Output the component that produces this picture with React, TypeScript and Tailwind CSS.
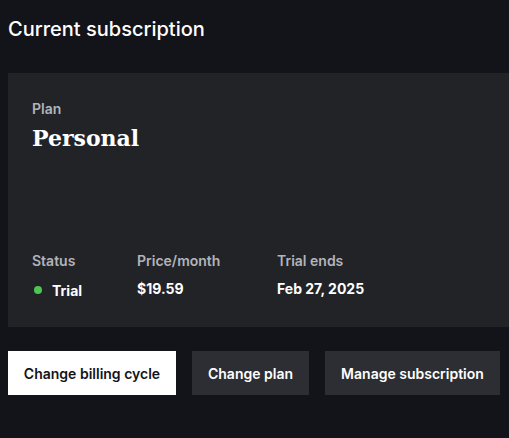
import React from "react";

const sans = { fontFamily: "Inter, 'Noto Sans', sans-serif" };

function Field({ label, children, width }: { label: string; children: React.ReactNode; width: string }) {
  return (
    <div className={`flex flex-col gap-[8px] ${width}`}>
      <div className="text-[14px] leading-[20px] font-semibold text-[#b3b3bb]">{label}</div>
      <div className="text-[14px] leading-[20px] font-bold text-white">{children}</div>
    </div>
  );
}

export default function App() {
  return (
    <div className="min-h-[438px] w-full bg-[#131419] overflow-hidden" style={sans}>
      <h1 className="pl-2 pt-[15px] text-[20px] leading-[28px] font-medium text-white">Current subscription</h1>

      <section className="ml-2 mt-[30px] h-[254px] bg-[#222327] px-6 pt-[26px] flex flex-col">
        <div className="text-[14px] leading-[20px] font-semibold text-[#b3b3bb]">Plan</div>
        <div
          className="mt-[3px] text-[22px] leading-[32px] font-bold text-white"
          style={{ fontFamily: "'DejaVu Serif', 'Liberation Serif', serif" }}
        >
          Personal
        </div>

        <div className="mt-auto mb-[26px] flex">
          <Field label="Status" width="w-[105px]">
            <span className="flex items-center gap-[10px]">
              <span className="ml-[2px] h-[8px] w-[8px] rounded-full bg-[#4cc552]" />
              <span className="mt-[2px]">Trial</span>
            </span>
          </Field>
          <Field label="Price/month" width="w-[140px]">$19.59</Field>
          <Field label="Trial ends" width="w-[140px]">Feb 27, 2025</Field>
        </div>
      </section>

      <div className="ml-2 mt-6 flex gap-4">
        <button className="h-[44px] w-[168px] bg-white text-[#131419] text-[14px] font-semibold">
          Change billing cycle
        </button>
        <button className="h-[44px] w-[117px] bg-[#2c2e33] text-white text-[14px] font-semibold">
          Change plan
        </button>
        <button className="h-[44px] w-[175px] bg-[#2c2e33] text-white text-[14px] font-semibold">
          Manage subscription
        </button>
      </div>
    </div>
  );
}
